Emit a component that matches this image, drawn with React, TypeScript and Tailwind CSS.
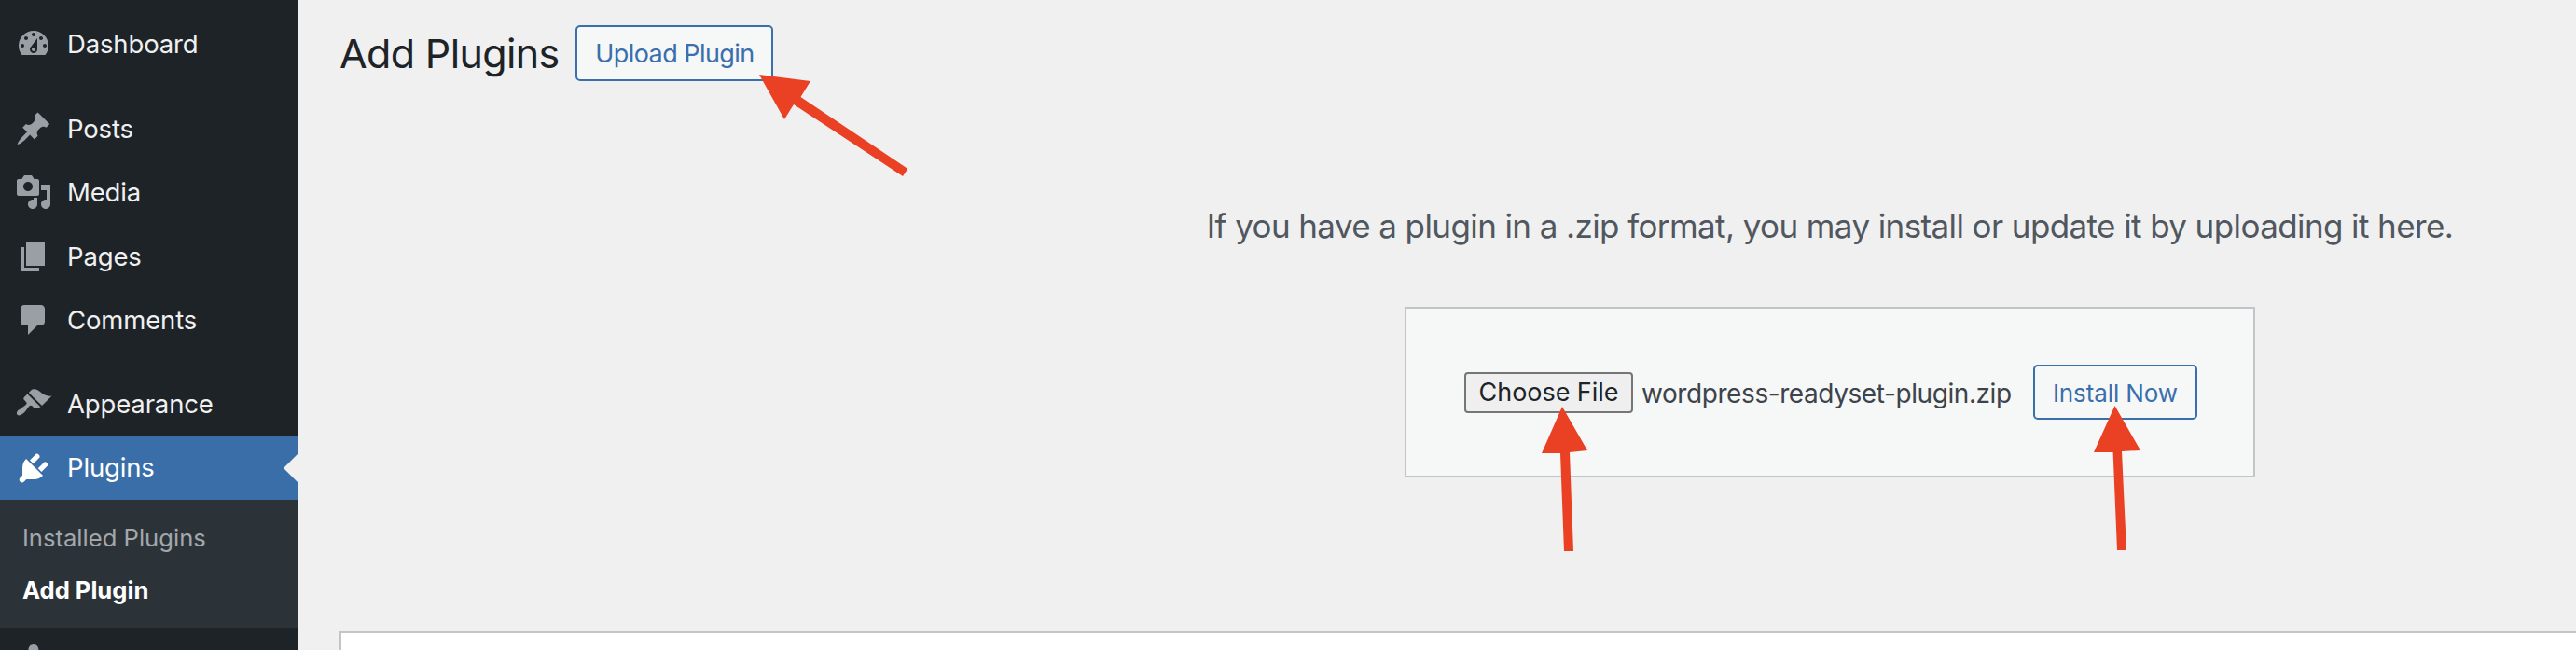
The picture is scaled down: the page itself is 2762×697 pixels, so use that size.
import React from "react";

const ICONS: Record<string, string> = {
  dashboard:
    "M3.76 16h12.48c1.1-1.37 1.76-3.11 1.76-5 0-4.42-3.58-8-8-8s-8 3.58-8 8c0 1.89.66 3.63 1.76 5zM10 4c.55 0 1 .45 1 1s-.45 1-1 1-1-.45-1-1 .45-1 1-1zM6 6c.55 0 1 .45 1 1s-.45 1-1 1-1-.45-1-1 .45-1 1-1zm8 0c.55 0 1 .45 1 1s-.45 1-1 1-1-.45-1-1 .45-1 1-1zm-5.37 5.55L12 7v6c0 1.1-.9 2-2 2s-2-.9-2-2c0-.57.24-1.08.63-1.45zM4 10c.55 0 1 .45 1 1s-.45 1-1 1-1-.45-1-1 .45-1 1-1zm12 0c.55 0 1 .45 1 1s-.45 1-1 1-1-.45-1-1 .45-1 1-1zm-5 3c0-.55-.45-1-1-1s-1 .45-1 1 .45 1 1 1 1-.45 1-1z",
  posts:
    "M10.44 3.02l1.82-1.82 6.36 6.35-1.83 1.82c-1.05-.68-2.48-.57-3.41.36l-.75.75c-.92.93-1.04 2.35-.35 3.41l-1.83 1.82-2.41-2.41-2.8 2.79c-.42.42-3.38 2.71-3.8 2.29s1.86-3.39 2.28-3.81l2.79-2.79L4.1 9.36l1.83-1.82c1.05.69 2.48.57 3.4-.36l.75-.75c.93-.92 1.05-2.35.36-3.41z",
  media:
    "M13 11V4c0-.55-.45-1-1-1h-1.67L9 1H5L3.67 3H2c-.55 0-1 .45-1 1v7c0 .55.45 1 1 1h10c.55 0 1-.45 1-1zM7 4.5c1.38 0 2.5 1.12 2.5 2.5S8.38 9.5 7 9.5 4.5 8.38 4.5 7 5.62 4.5 7 4.5zM14 6h5v10.5c0 1.38-1.12 2.5-2.5 2.5S14 17.88 14 16.5s1.12-2.5 2.5-2.5c.17 0 .34.02.5.05V9h-3V6zm-4 8.05V13h2v3.5c0 1.38-1.12 2.5-2.5 2.5S7 17.88 7 16.5 8.12 14 9.5 14c.17 0 .34.02.5.05z",
  pages: "M6 15V2h10v13H6zm-1 1h8v2H3V5h2v11z",
  comments:
    "M5 2h9c1.1 0 2 .9 2 2v7c0 1.1-.9 2-2 2h-2l-5 5v-5H5c-1.1 0-2-.9-2-2V4c0-1.1.9-2 2-2z",
  appearance:
    "M14.48 11.06L7.41 3.99l1.5-1.5c.5-.56 2.3-.47 3.51.32 1.21.8 1.43 1.28 2.91 2.1 1.18.64 2.45 1.26 4.45.85zm-.71.71L6.7 4.7 4.93 6.47c-.39.39-.39 1.02 0 1.41l1.06 1.06c.39.39.39 1.03 0 1.42-.6.6-1.43 1.11-2.21 1.69-.35.26-.7.53-1.01.84C1.43 13.23.4 14.96 1.3 15.87c.9.9 2.64-.13 3.97-1.47.31-.31.58-.66.84-1.01.58-.78 1.09-1.61 1.69-2.21.39-.39 1.02-.39 1.41 0l1.06 1.06c.39.39 1.02.39 1.41 0z",
  plugins:
    "M13.11 4.36L9.87 7.6 8 5.73l3.24-3.24c.35-.34 1.05-.2 1.56.32.52.51.66 1.21.31 1.55zm-8 1.77l.91-1.12 9.01 9.01-1.19.84c-.71.71-2.63 1.16-3.82 1.16H6.14L4.9 17.26c-.59.59-1.54.59-2.12 0-.59-.58-.59-1.53 0-2.12l1.24-1.24v-3.88c0-1.13.4-3.19 1.09-3.89zm7.26 3.97l3.24-3.24c.34-.35 1.04-.21 1.55.31.52.51.66 1.21.31 1.55l-3.24 3.25z",
  users:
    "M10 9.25c-2.27 0-2.73-3.44-2.73-3.44C7 4.02 7.82 2 9.97 2c2.16 0 2.98 2.02 2.71 3.81 0 0-.41 3.44-2.68 3.44zm0 2.57L12.72 10c2.39 0 4.52 2.33 4.52 4.53v2.49s-3.65 1.13-7.24 1.13c-3.65 0-7.24-1.13-7.24-1.13v-2.49c0-2.25 1.94-4.48 4.47-4.48z",
};

function Dashicon({ name, className }: { name: string; className: string }) {
  return (
    <svg viewBox="0 0 20 20" className={`h-10 w-10 shrink-0 fill-current ${className}`}>
      <path d={ICONS[name]} fillRule="evenodd" />
    </svg>
  );
}

function MenuItem({ icon, label, rowClass }: { icon: string; label: string; rowClass: string }) {
  return (
    <div className={`flex shrink-0 items-center pl-4 text-[#f0f0f1] ${rowClass}`}>
      <Dashicon name={icon} className="text-[#9a9fa5]" />
      <span className="ml-[16px] pt-[2px] text-[27.5px] leading-none tracking-[-0.15px]">{label}</span>
    </div>
  );
}

export default function App() {
  return (
    <div className="relative flex h-[697px] w-[2762px] overflow-hidden bg-[#f0f0f1] font-['Inter',sans-serif]">
      <aside className="flex w-[320px] shrink-0 flex-col bg-[#1d2327] pt-[13px]">
        <MenuItem icon="dashboard" label="Dashboard" rowClass="h-[68px]" />
        <div className="h-[22px] shrink-0" />
        <MenuItem icon="posts" label="Posts" rowClass="h-[69px]" />
        <MenuItem icon="media" label="Media" rowClass="h-[68px]" />
        <MenuItem icon="pages" label="Pages" rowClass="h-[69px]" />
        <MenuItem icon="comments" label="Comments" rowClass="h-[68px]" />
        <div className="h-[22px] shrink-0" />
        <MenuItem icon="appearance" label="Appearance" rowClass="h-[68px]" />
        <div className="relative flex h-[69px] shrink-0 items-center bg-[#3a6ea9] pl-4 text-white">
          <Dashicon name="plugins" className="text-white" />
          <span className="ml-[16px] text-[27.5px] leading-none tracking-[-0.15px]">Plugins</span>
          <div className="absolute right-0 top-1/2 h-0 w-0 -translate-y-1/2 border-y-[16px] border-r-[16px] border-y-transparent border-r-[#f0f0f1]" />
        </div>
        <div className="flex h-[137px] shrink-0 flex-col justify-center gap-[26px] bg-[#2c3338] pl-[24px]">
          <div className="text-[25.6px] leading-[30px] text-[#a2a7ad]">Installed Plugins</div>
          <div className="text-[25.6px] font-bold leading-[30px] text-white">Add Plugin</div>
        </div>
        <div className="flex h-[24px] shrink-0 items-start pl-4 pt-[14px]">
          <Dashicon name="users" className="text-[#9a9fa5]" />
        </div>
      </aside>

      <main className="ml-[44px] flex w-[3196px] shrink-0 flex-col">
        <header className="mt-[27px] flex h-[60px] shrink-0 items-center gap-[18px]">
          <h1 className="text-[43px] font-normal leading-none tracking-[-0.65px] text-[#1d2327]">Add Plugins</h1>
          <button className="flex h-[60px] w-[212px] items-center justify-center rounded-[5px] border-2 border-[#3a6fad] bg-[#f6f7f7] pt-[2px] text-[27px] tracking-[-0.55px] text-[#3a6fad]">
            Upload Plugin
          </button>
        </header>

        <p className="mt-[135px] shrink-0 text-center text-[35px] leading-[40px] tracking-[-0.6px] text-[#50575e]">
          If you have a plugin in a .zip format, you may install or update it by uploading it here.
        </p>

        <div className="mx-auto mt-[67px] flex h-[183px] w-[912px] shrink-0 items-center border-2 border-[#c3c4c7] bg-[#f6f7f7] pl-[62px]">
          <button className="flex h-[44px] w-[181px] items-center justify-center rounded-[4px] border-2 border-[#767676] bg-[#efefef] pt-[2px] text-[27px] tracking-[-0.05px] text-[#1d2327]">
            Choose File
          </button>
          <span className="ml-[9px] w-[420px] pt-[2px] text-[28px] tracking-[-0.42px] text-[#3c434a]">wordpress-readyset-plugin.zip</span>
          <button className="flex h-[59px] w-[176px] items-center justify-center rounded-[5px] border-2 border-[#3a6fad] bg-[#f6f7f7] pt-[2px] text-[26px] tracking-[-0.1px] text-[#3a6fad]">
            Install Now
          </button>
        </div>

        <div className="mt-[165px] h-[200px] shrink-0 border-2 border-[#c3c4c7] bg-white" />
      </main>

      <svg viewBox="0 0 2762 697" className="absolute inset-0 h-[697px] w-[2762px] fill-[#ea4023]">
        <polygon points="814,80 869,87 858.5,104 973.4,181 968,189 851,112 841,128" />
        <polygon points="1675,436 1702,483 1683,485 1687,591 1677,591 1673,486 1653,486" />
        <polygon points="2267.5,435 2295,483 2275,484 2280,590 2270,590 2265.6,485 2245,485" />
      </svg>
    </div>
  );
}
